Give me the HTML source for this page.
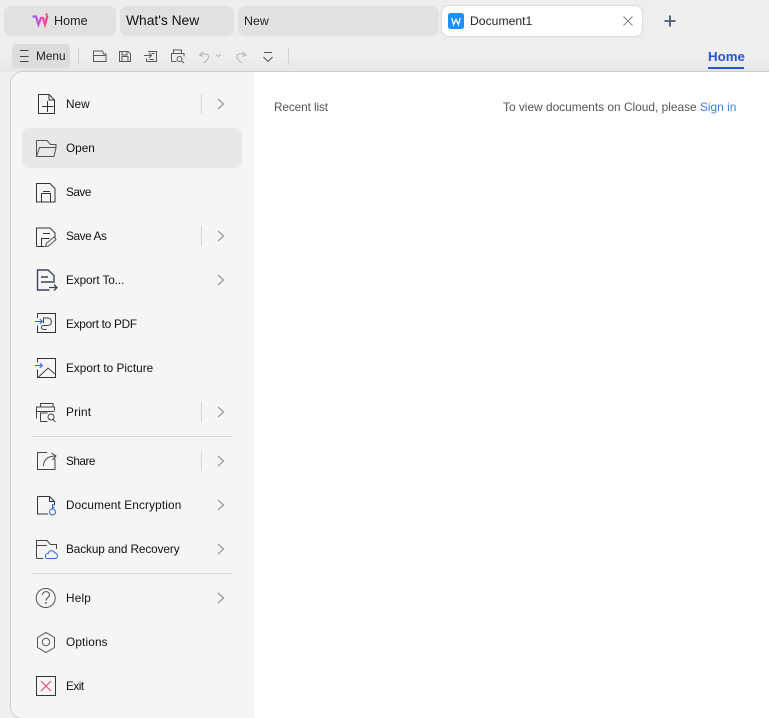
<!DOCTYPE html>
<html style="overflow:hidden;width:769px;height:718px"><head><meta charset="utf-8"><style>
html,body{margin:0;padding:0}
body{width:769px;height:718px;overflow:hidden;position:relative;background:#eeeeee;font-family:"Liberation Sans",sans-serif;color:#111}
.t{position:absolute;white-space:nowrap;line-height:16px;font-size:11.8px}
.b{position:absolute}
svg{position:absolute;left:0;top:0}
</style></head><body>
<div class="b" style="left:0;top:56px;width:769px;height:16px;background:linear-gradient(#eeeeee,#e6e6e6)"></div>
<div class="b" style="left:4px;top:6px;width:112px;height:30px;background:#e1e1e1;border-radius:7px"></div>
<div class="b" style="left:120px;top:6px;width:114px;height:30px;background:#e1e1e1;border-radius:7px"></div>
<div class="b" style="left:238px;top:6px;width:201px;height:30px;background:#e1e1e1;border-radius:7px"></div>
<div class="b" style="left:442px;top:6px;width:200px;height:30px;background:#fff;border-radius:7px;box-shadow:0 0 2px #bbb"></div>
<div class="b" style="left:12px;top:44px;width:58px;height:24px;background:#dcdcdc;border-radius:4px"></div>
<div class="b" style="left:11px;top:72px;width:770px;height:646px;background:#fff;border-radius:12px 12px 0 12px;box-shadow:0 0 0 1px #cdcdcd"></div>
<div class="b" style="left:11px;top:72px;width:243px;height:646px;background:#f5f5f5;border-radius:12px 0 0 12px"></div>
<div class="b" style="left:22px;top:128px;width:220px;height:40px;background:#e8e8e8;border-radius:7px"></div>
<div class="b" style="left:31px;top:436px;width:202px;height:1px;background:#d9d9d9"></div>
<div class="b" style="left:31px;top:573px;width:202px;height:1px;background:#d9d9d9"></div>
<div class="b" style="left:708px;top:67px;width:36px;height:2px;background:#2454d6"></div>

<div class="t" style="left:54px;top:13px;font-size:12.6px;color:#222">Home</div>
<div class="t" style="left:126px;top:13px;font-size:13.8px;color:#111">What's New</div>
<div class="t" style="left:244px;top:13px;font-size:12.4px;color:#222">New</div>
<div class="t" style="left:470px;top:13px;font-size:12.2px;color:#222">Document1</div>
<div class="t" style="left:36px;top:48px;font-size:11.8px;color:#222">Menu</div>
<div class="t" style="left:708px;top:49px;font-size:13.3px;font-weight:bold;color:#2454d6">Home</div>
<div class="t" style="left:274px;top:99px;color:#555;letter-spacing:-.1px">Recent list</div>
<div class="t" style="left:503px;top:99px;color:#555;font-size:11.9px">To view documents on Cloud, please <span style="color:#3d7fd9">Sign in</span></div>

<div class="t" style="left:66px;top:96px">New</div>
<div class="t" style="left:66px;top:140px">Open</div>
<div class="t" style="left:66px;top:184px;letter-spacing:-.5px">Save</div>
<div class="t" style="left:66px;top:228px;letter-spacing:-.4px">Save As</div>
<div class="t" style="left:66px;top:272px;letter-spacing:-.1px">Export To...</div>
<div class="t" style="left:66px;top:316px;letter-spacing:-.25px">Export to PDF</div>
<div class="t" style="left:66px;top:360px">Export to Picture</div>
<div class="t" style="left:66px;top:404px;letter-spacing:.2px">Print</div>
<div class="t" style="left:66px;top:453px;letter-spacing:-.5px">Share</div>
<div class="t" style="left:66px;top:497px;letter-spacing:.14px">Document Encryption</div>
<div class="t" style="left:66px;top:541px;letter-spacing:-.1px">Backup and Recovery</div>
<div class="t" style="left:66px;top:590px;letter-spacing:.2px">Help</div>
<div class="t" style="left:66px;top:634px;letter-spacing:.15px">Options</div>
<div class="t" style="left:66px;top:678px;letter-spacing:-.5px">Exit</div>

<svg width="769" height="718" viewBox="0 0 769 718" fill="none" stroke="#444" stroke-width="1">
<defs><linearGradient id="g" x1="0" x2="1" y1="0" y2="0"><stop offset="0" stop-color="#8f5cf5"/><stop offset=".55" stop-color="#e04fc0"/><stop offset="1" stop-color="#f5487a"/></linearGradient></defs>
<!-- logo -->
<path d="M32.500 16.500h3.500l2.500 8 2.500-6.500h2l2 6.500 2.500-9" stroke="url(#g)" stroke-width="2.300"/>
<circle cx="46.500" cy="14.500" r="1.200" fill="#f0487a" stroke="none"/>
<!-- doc logo -->
<rect x="448" y="13" width="16" height="16" rx="2.500" fill="#1e90ff" stroke="none"/>
<path d="M451.800 18l1.800 6.500 2.400-5 2.400 5 1.800-6.500" stroke="#fff" stroke-width="1.300"/>
<!-- close, plus -->
<path d="M623.500 16.500l9 9M632.500 16.500l-9 9" stroke="#888" stroke-width="1.100"/>
<path d="M670 15.500v11M664.500 21h11" stroke="#4a5570" stroke-width="1.800"/>
<!-- menu icon -->
<path d="M20 50.500h8.500M20 56.500h8.500M20 61.500h8.500" stroke="#444"/>
<path d="M78.500 48v16M288.500 48v17" stroke="#d2d2d2"/>
<!-- toolbar -->
<g stroke="#5a5a5a">
<path d="M93.500 61.500v-10.500h9l1 3h2.500v7.500zM93.500 55.500h12.500"/>
<path d="M119.500 51.500h8.500l2.500 2.500v7.500h-11zM122 51.500v3.500h5v-3.500M122 61.500v-5h6v5"/>
<path d="M148 51.500h8.500v10h-10v-3M144 55.500h7.500M149 53l2.500 2.500-2.500 2.500M149.500 59.500h4.500M151.500 53.500h3"/>
<path d="M173.500 53.500v-3.500h8v3.500M171.500 61.500v-8h12.500v3M171.500 61.500h5"/>
<circle cx="179.500" cy="59" r="2.500"/><path d="M181.500 61l2.500 2"/>
</g>
<g stroke="#b4b4b4">
<path d="M203 52l-3.500 3 3.800 1.500M199.700 55c3-2 9-1.500 9 1.500 0 2.500-3 5-5 6.500"/>
<path d="M216 54.500l2.500 2 2.500-2"/>
<path d="M242.500 52l3.500 3-3.800 1.500M245.800 55c-3-2-9-1.500-9 1.500 0 2.500 3 5 5 6.500"/>
</g>
<path d="M264 52.500h8M263.500 57l4.500 4.500 4.500-4.500" stroke="#555"/>
<!-- new -->
<path d="M38.500 94.500h10.500l5.500 5.500v13.500h-16zM49 94.500v5.500h5.500M47.500 101v11M42 106.500h11.500" stroke="#333"/>
<!-- open -->
<path d="M36.500 156.500v-16h10.500l3.500 4h5.500v2.500M39.500 147.500h16.500l-2 9h-17.500z" stroke="#555"/>
<!-- save -->
<path d="M36.500 183.500h13.500l5 5v13.500h-18.500zM43 191.500h7M41.500 202v-8.500h9v8.500" stroke="#333"/>
<!-- save as -->
<path d="M36.500 246.500v-18.500h13.500l5 5v5M36.500 246.500h8M43 233.500h7M41.500 246.500v-8h8" stroke="#333"/>
<path d="M45.500 246.500l.8-3 7.700-6.500 2 2.500-7.500 6.500-3 .5z" stroke="#555"/>
<!-- export to -->
<path d="M54 283v-7.500l-6-5.500h-10.500v20h12M41 277h7M41 282h12" stroke="#3c4557" stroke-width="1.400"/>
<path d="M49 287.500h8M54 284.500l3 3-3 3" stroke="#3c4557" stroke-width="1.300"/>
<!-- export pdf -->
<path d="M37.500 318v-4.500h18v19h-18v-7" stroke="#333"/>
<path d="M35 321.500h7M39.800 319l2.500 2.500-2.500 2.500" stroke="#2d63e0"/>
<path d="M43.500 323v-5h4.500c4.500 0 4.500 7.500 0 7.500h-4c-3.500 0-3.500 4 0 4h2.500" stroke="#444"/>
<!-- export picture -->
<path d="M37.500 362.500v-4h18v19h-18v-8" stroke="#333"/>
<path d="M35 365.500h7M39.800 363l2.500 2.500-2.500 2.500" stroke="#2d63e0"/>
<path d="M38 377.500l10-9.500 7 6" stroke="#444"/>
<!-- print -->
<path d="M40.500 407v-3.500h12.500v3.500M36.500 418.500v-11.500h18v3.500M36.500 411.500h18M40.500 421.500v-8.500h7M40.500 421.500h7" stroke="#444"/>
<circle cx="51" cy="417" r="3" stroke="#444"/><path d="M53 419.500l2.500 2.500" stroke="#444"/>
<!-- share -->
<path d="M47 452.500h-9.500v17h17.500v-11" stroke="#444"/>
<path d="M43.500 466c0-6 4-10 12-10M51.500 453l4.500 3-3.500 4" stroke="#444"/>
<!-- encryption -->
<path d="M37.500 496.500h12l5 5v3M37.500 496.500v17.500h10.500M49.500 496.500v5h5" stroke="#333"/>
<path d="M52.500 504v5M52.500 505h2.500M52.500 507.500h2" stroke="#2d63e0"/>
<circle cx="52.500" cy="512" r="3" stroke="#2d63e0"/>
<!-- backup -->
<path d="M36.500 558.500v-18h10.500l3.500 4h6v4.500M36.500 558.500h7M36.500 545.500h10.500" stroke="#444"/>
<path d="M47 558.500h7.500c2.500 0 3-1.500 3-2.800s-1.500-3-3-3c-.5-2.500-5.500-3-6 .5-3-.5-4.500 5.300-1.500 5.300z" stroke="#2d63e0"/>
<!-- help -->
<circle cx="45.700" cy="598" r="9.500" stroke="#555"/>
<path d="M42.500 595c0-4.500 7-4.500 7 0 0 2.500-3.500 2.500-3.500 5.500" stroke="#444"/>
<circle cx="46" cy="603" r=".9" fill="#444" stroke="none"/>
<!-- options -->
<path d="M46 632.500l8.500 5v10l-8.500 5-8.500-5v-10z" stroke="#555"/>
<circle cx="46" cy="642" r="3.700" stroke="#555"/>
<!-- exit -->
<rect x="36.500" y="676.500" width="19" height="19" stroke="#333"/>
<path d="M41 681l10 10M51 681l-10 10" stroke="#d8436a"/>
<!-- dividers & chevrons -->
<path d="M201.500 94v20M201.500 226v20M201.500 402v20M201.500 451v20" stroke="#d6d6d6"/>
<g stroke="#888" stroke-width="1.100">
<path d="M218 99l5.500 5-5.500 5M218 231l5.500 5-5.500 5M218 275l5.500 5-5.500 5M218 407l5.500 5-5.500 5M218 456l5.500 5-5.500 5M218 500l5.500 5-5.500 5M218 544l5.500 5-5.500 5M218 593l5.500 5-5.500 5"/>
</g>
</svg>
</body></html>
